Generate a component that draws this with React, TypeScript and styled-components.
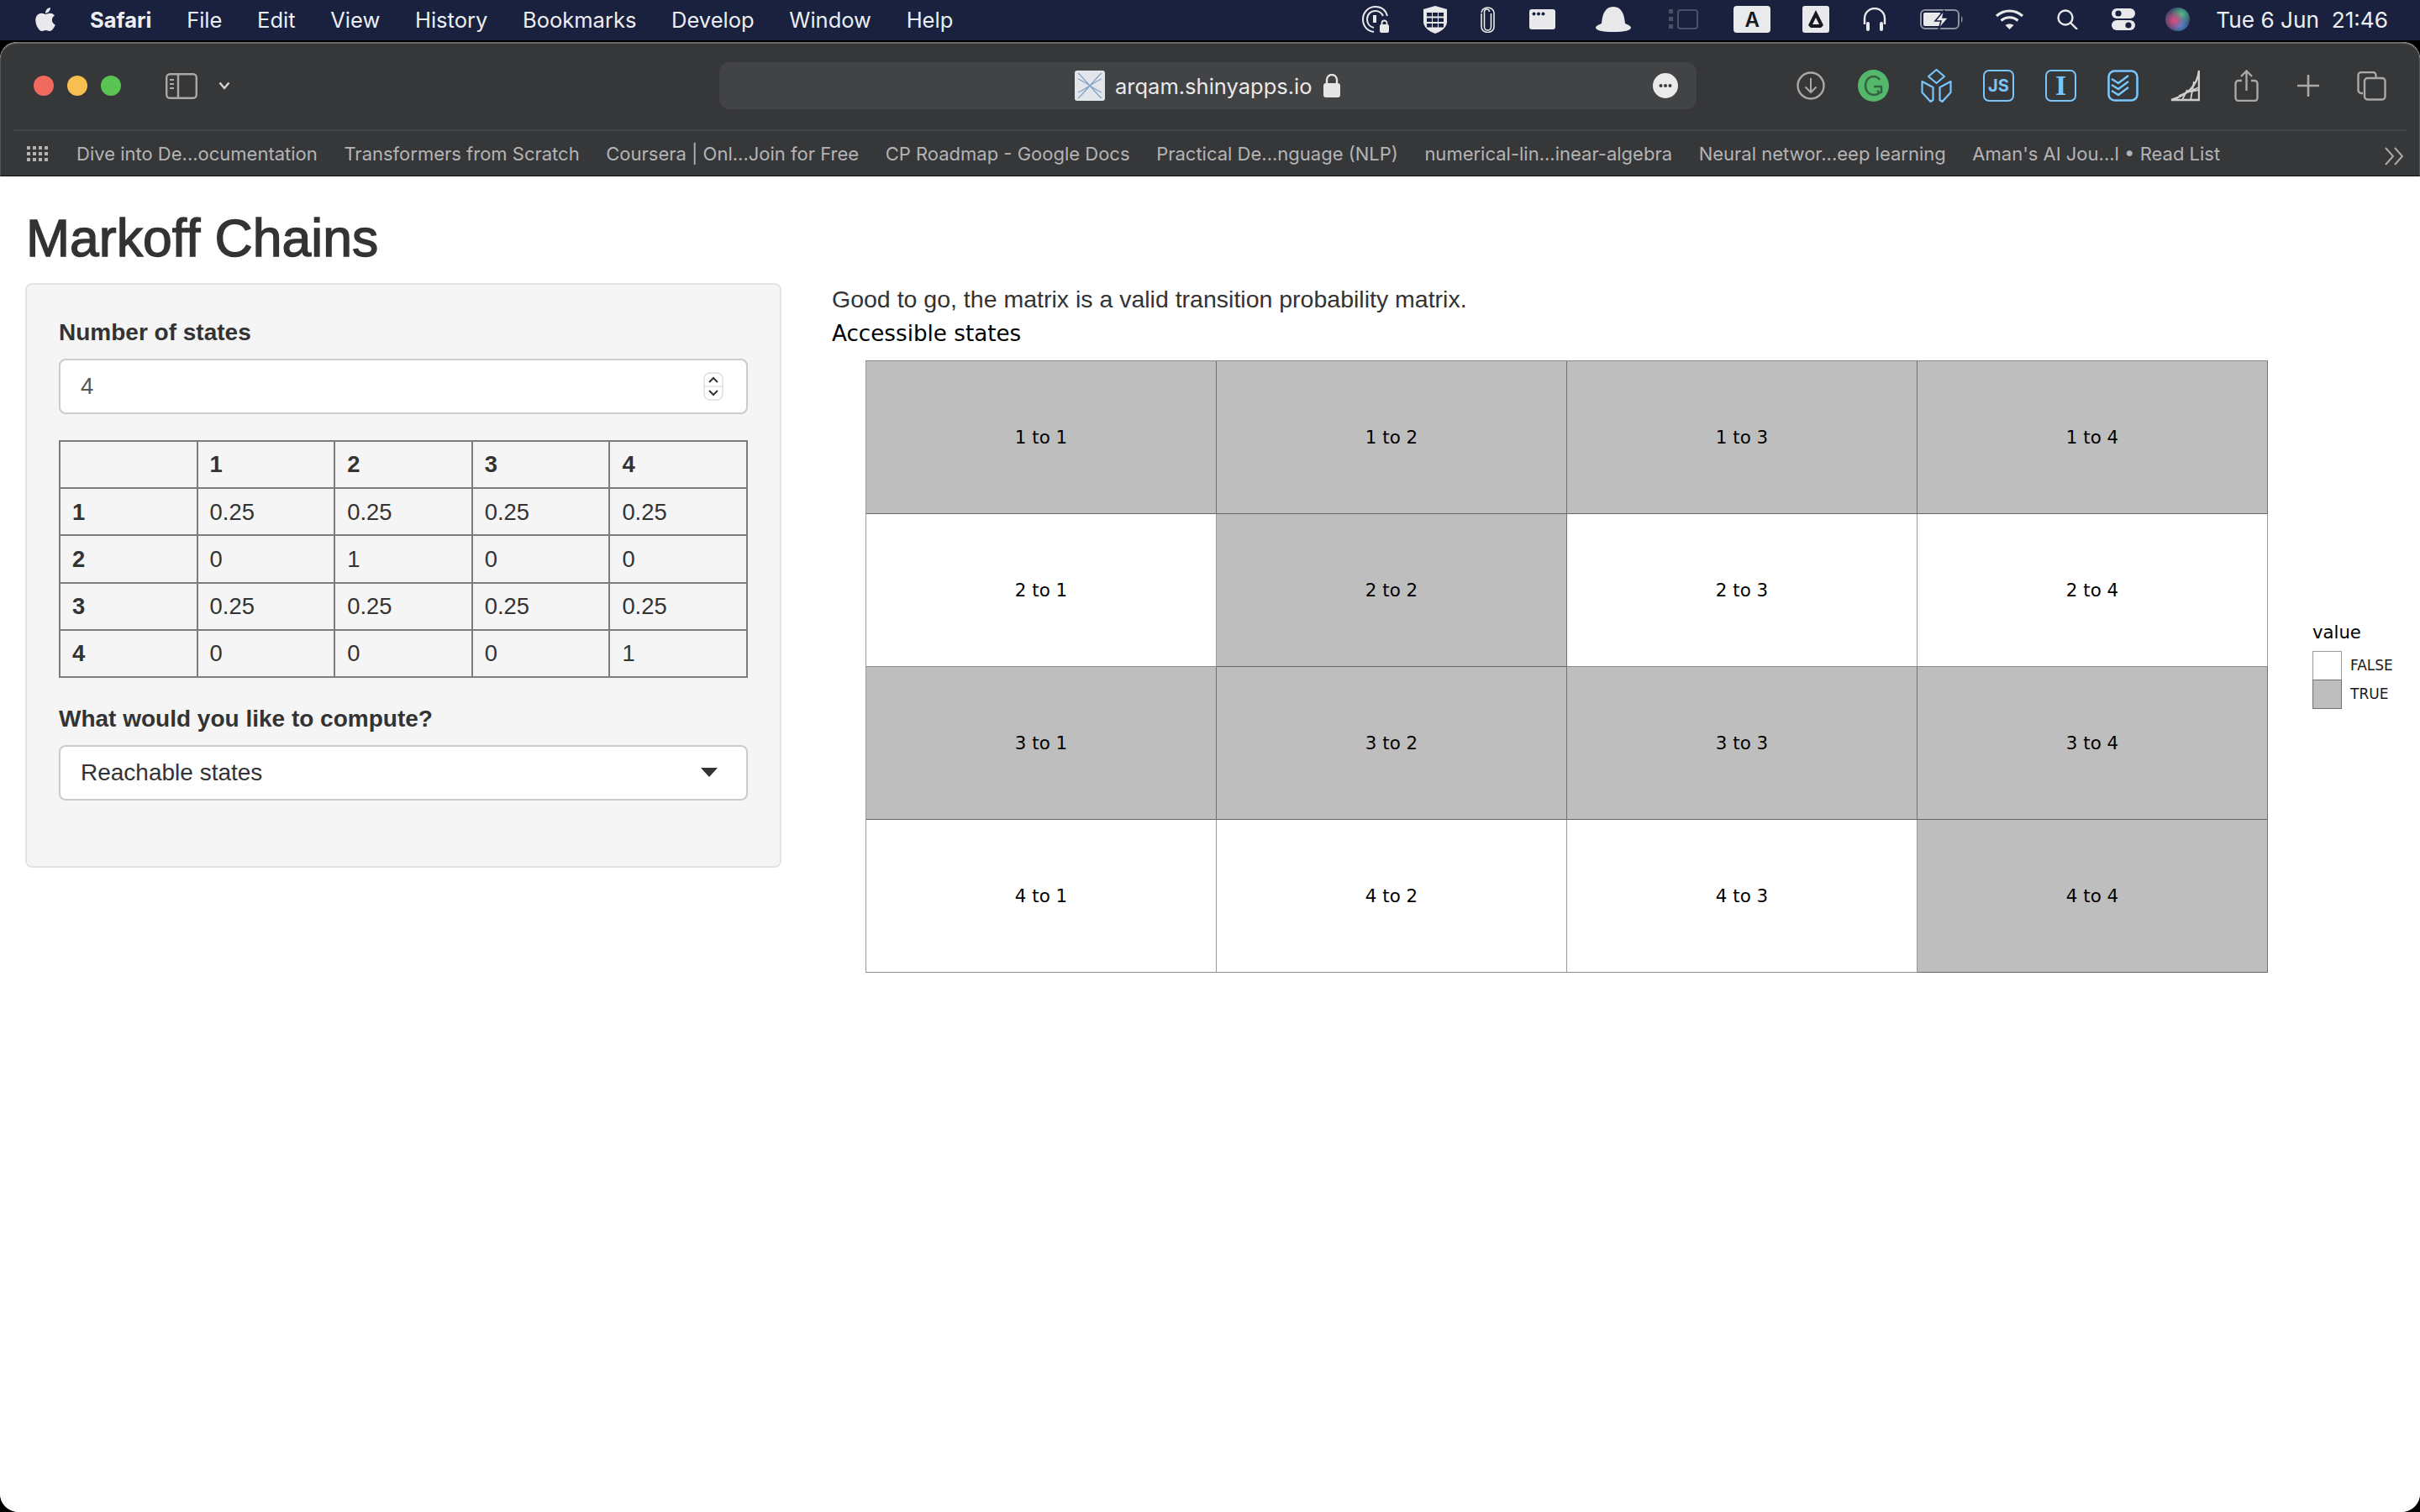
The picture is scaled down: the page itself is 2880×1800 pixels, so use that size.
import React from "react";
import styled, { createGlobalStyle } from "styled-components";
import { FaApple } from "react-icons/fa";

const Global = createGlobalStyle`
  html, body { margin: 0; padding: 0; background: #000; width: 2880px; height: 1800px; overflow: hidden; }
  * { box-sizing: border-box; }
`;

const Screen = styled.div`
  width: 2880px; height: 1800px; display: flex; flex-direction: column; background: #000;
`;
const MenuBar = styled.header`
  height: 48px; flex: none; display: flex; align-items: center; background: #19213e;
  padding: 0 0 2px 40px; color: #eceef2; font: 400 25.5px "Inter", sans-serif; margin-bottom: 2px;
`;
const AppleMark = styled(FaApple)`
  width: 28px; height: 32px; color: #e9e9eb; margin-right: 39px; flex: none;
`;
const Menus = styled.nav`display: flex; gap: 41.7px; align-items: center;`;
const MenuItem = styled.span<{ $bold?: boolean }>`
  font-weight: ${(p) => (p.$bold ? 700 : 400)};
  white-space: nowrap;
`;
const Slot = styled.span<{ $ml: number }>`
  display: inline-flex; flex: none; margin-left: ${(p) => p.$ml}px;
`;
const Tray = styled.div`
  margin-left: auto; display: flex; align-items: center; height: 100%;
`;
const KeyBox = styled.span`
  width: 44px; height: 32px; border-radius: 4px; background: #e9eaec; color: #16181d;
  font: 600 24px "Inter", sans-serif; display: flex; align-items: center; justify-content: center;
`;
const Clock = styled.span`
  margin-left: 31px; margin-right: 38px; font-size: 26.2px; white-space: pre; color: #eceef2;
`;

const Browser = styled.main`
  flex: 1; display: flex; flex-direction: column; border-radius: 20px 20px 22px 22px; overflow: hidden; background: #fff;
`;
const Chrome = styled.div`
  flex: none; height: 160px; background: #363739; display: flex; flex-direction: column;
  border-top: 2px solid #69696b; border-left: 1px solid #555658; border-right: 1px solid #555658;
  border-bottom: 1px solid #0d0d0e; border-radius: 20px 20px 0 0;
`;
const Toolbar = styled.div`
  height: 102px; flex: none; display: flex; align-items: center; padding: 0 0 2px 39px;
`;
const Light = styled.span<{ $c: string; $first?: boolean }>`
  width: 24px; height: 24px; border-radius: 50%; background: ${(p) => p.$c}; flex: none;
  margin-left: ${(p) => (p.$first ? 0 : 16)}px;
`;
const UrlBar = styled.div`
  width: 1163px; height: 56px; border-radius: 12px; background: #424345; flex: none;
  margin-left: 582px; display: flex; align-items: center; padding: 0 22px 0 423px;
`;
const UrlText = styled.span`
  margin-left: 12px; margin-right: 13px; color: #e9e9ea; font: 400 25.5px "Inter", sans-serif; white-space: nowrap;
`;
const MoreSlot = styled.span`margin-left: auto; display: inline-flex;`;
const BadgeBox = styled.span<{ $serif?: boolean }>`
  width: 37px; height: 38px; border: 2.5px solid #79c6fb; border-radius: 7px; color: #79c6fb;
  display: flex; align-items: center; justify-content: center;
  font: ${(p) => (p.$serif ? '700 34px "Liberation Serif", serif' : '700 20px "Inter", sans-serif')};
`;
const Separator = styled.div`height: 2px; margin: 0 15px; background: #434446; flex: none;`;
const Bookmarks = styled.div`
  height: 54px; flex: none; display: flex; align-items: center; padding-left: 31px; padding-right: 18px;
  color: #b4b4b5; font: 400 22px "Inter", sans-serif;
`;
const BookmarkList = styled.div`display: flex; gap: 31.6px; margin-left: 34px;`;
const Bookmark = styled.span`white-space: nowrap;`;
const MoreChevrons = styled.span`margin: 6px 0 0 auto; display: inline-flex;`;

const Page = styled.div`
  flex: 1; background: #fff; padding: 39px 0 0 30px; color: #333;
  font: 400 28px/40px "Liberation Sans", Arial, sans-serif;
`;
const Title = styled.h2`
  margin: 0 0 20px 1px; font: 400 62.5px/68px "Liberation Sans", Arial, sans-serif; color: #333;
  -webkit-text-stroke: 1.4px #333;
`;
const Layout = styled.div`display: flex; align-items: flex-start;`;
const Well = styled.aside`
  width: 900px; height: 696px; flex: none; background: #f5f5f5; border: 2px solid #e3e3e3; border-radius: 8px;
  padding: 41px 38px 0; display: flex; flex-direction: column;
`;
const FieldLabel = styled.label<{ $mt?: number }>`
  font-weight: 700; line-height: 32px; color: #333; margin-top: ${(p) => p.$mt ?? 0}px; margin-bottom: 15px;
`;
const Field = styled.div<{ $pr: number }>`
  height: 66px; flex: none; background: #fff; border: 2px solid #ccc; border-radius: 8px;
  display: flex; align-items: center; justify-content: space-between; padding: 0 ${(p) => p.$pr}px 0 24px;
`;
const NumberValue = styled.span`color: #555; font-size: 27.4px;`;
const SelectValue = styled.span`color: #333;`;
const Matrix = styled.table`
  width: 820px; margin-top: 31px; border-collapse: collapse; table-layout: fixed; font-size: 27.4px;
  th, td { height: 56.2px; border: 2px solid #7d7d7d; padding: 0 14px; text-align: left; color: #333; line-height: 1; }
  th { font-weight: 700; }
  td { font-weight: 400; }
`;
const Main = styled.section`margin-left: 60px; flex: none;`;
const Message = styled.div`color: #333; height: 40px; white-space: nowrap; font-size: 28.5px; line-height: 39px;`;
const PlotTitle = styled.div`
  color: #000; height: 40px; font: 400 26.2px/40px "DejaVu Sans", sans-serif;
`;
const PlotRow = styled.div`display: flex; margin: 12px 0 0 40px; align-items: flex-start;`;
const HeatGrid = styled.div`
  display: grid; grid-template-columns: repeat(4, 417px); grid-auto-rows: 182px;
  border-top: 1px solid rgba(0,0,0,.45); border-left: 1px solid rgba(0,0,0,.4);
`;
const HeatCell = styled.div<{ $on: boolean }>`
  background: ${(p) => (p.$on ? "#bebebe" : "#fff")};
  border-right: 1px solid rgba(0,0,0,.4); border-bottom: 1px solid rgba(0,0,0,.45);
  display: flex; align-items: center; justify-content: center;
  color: #000; font: 400 21.4px/1 "DejaVu Sans", sans-serif;
`;
const Legend = styled.div`margin: 308px 0 0 53px; display: flex; flex-direction: column; color: #000;`;
const LegendTitle = styled.div`font: 400 21.2px/32px "DejaVu Sans", sans-serif; margin-bottom: 6px;`;
const LegendRow = styled.div`display: flex; align-items: center; height: 34px;`;
const Swatch = styled.span<{ $on: boolean }>`
  width: 35px; height: 35px; flex: none; background: ${(p) => (p.$on ? "#bebebe" : "#fff")};
  border: 1px solid rgba(0,0,0,.4);
`;
const LegendLabel = styled.span`margin-left: 10px; font: 400 17px/1 "DejaVu Sans", sans-serif; color: #1a1a1a;`;

const ink = "#e9e9eb";
const navy = "#19213e";
const grey = "#a9a9aa";
const blue = "#79c6fb";

const AtLock = () => (
  <svg width="32" height="32" viewBox="0 0 32 32" fill="none" stroke={ink}>
    <path d="M14 31C6 30 1 24 1 16 1 8 7 1 16 1c7 0 12 4 14 11" strokeWidth="2" />
    <path d="M14 26c-5-1-8-5-8-10 0-6 4-10 10-10 4 0 7 2 9 6" strokeWidth="2" />
    <path d="M15 11v9" strokeWidth="4" />
    <rect x="21" y="22" width="11" height="10" rx="2" fill={ink} stroke="none" />
    <path d="M23.5 23v-2.5a3 3 0 0 1 6 0V23" strokeWidth="1.8" />
  </svg>
);
const Shield = () => (
  <svg width="28" height="33" viewBox="0 0 28 33">
    <path d="M14 0l14 4v15c0 7-8 12-14 14C8 31 0 26 0 19V4z" fill={ink} />
    {[8, 14.5, 21].map((y) => [4, 11, 18].map((x) => <rect key={`${x}-${y}`} x={x} y={y} width="6" height="4.5" fill={navy} />))}
  </svg>
);
const Clip = () => (
  <svg width="17" height="31" viewBox="0 0 17 31" fill="none" stroke={ink} strokeWidth="1.6">
    <path d="M12.5 8v16a4 4 0 0 1-8 0V6a3 3 0 0 1 6 0M1 8v16a7.5 6.5 0 0 0 15 0V7A7.5 6 0 0 0 1 7" />
  </svg>
);
const DotsWindow = () => (
  <svg width="31" height="24" viewBox="0 0 31 24">
    <rect width="31" height="24" rx="3" fill={ink} />
    {[5.5, 11, 16.5].map((x) => <circle key={x} cx={x} cy="5.5" r="2" fill={navy} />)}
  </svg>
);
const Hat = () => (
  <svg width="42" height="30" viewBox="0 0 42 30">
    <path d="M21 0C11 0 8 9 7 20c-3 1-7 3-7 5 0 3 8 5 21 5s21-2 21-5c0-2-4-4-7-5C34 9 31 0 21 0z" fill={ink} />
  </svg>
);
const DimSidebar = () => (
  <svg width="35" height="24" viewBox="0 0 35 24" fill="#4a5066">
    <rect x="11" y="1" width="23" height="22" rx="3" fill="none" stroke="#4a5066" strokeWidth="2" />
    <rect width="5" height="5" /><rect y="9" width="5" height="5" /><rect y="18" width="5" height="5" />
  </svg>
);
const Drive = () => (
  <svg width="32" height="32" viewBox="0 0 32 32">
    <rect width="32" height="32" rx="3" fill={ink} />
    <path d="M16 5l9 18-3 3H10l-3-3zM16 14l-4 8h8z" fill="#16181d" fillRule="evenodd" />
  </svg>
);
const Headphones = () => (
  <svg width="28" height="29" viewBox="0 0 28 29" fill="none" stroke={ink}>
    <path d="M2 20v-7a12 12 0 0 1 24 0v7" strokeWidth="2.4" />
    <rect x="4" y="17" width="4" height="11" rx="2" fill={ink} stroke="none" />
    <rect x="20" y="17" width="4" height="11" rx="2" fill={ink} stroke="none" />
  </svg>
);
const Battery = () => (
  <svg width="51" height="24" viewBox="0 0 51 24">
    <rect x="1" y="1" width="45" height="22" rx="5" fill="none" stroke="#8f93a1" strokeWidth="2" />
    <path d="M49 8c2 1 2 7 0 8z" fill="#8f93a1" />
    <rect x="4" y="4" width="21" height="16" rx="2" fill={ink} />
    <path d="M29 1L18 14h7l-3 10 12-14h-7z" fill={ink} stroke={navy} strokeWidth="1.6" />
  </svg>
);
const Wifi = () => (
  <svg width="35" height="24" viewBox="0 0 35 24" fill="none" stroke={ink} strokeWidth="3.2">
    <path d="M2 8c9-8 22-8 31 0M7.5 13.5c6-5 14-5 20 0" />
    <path d="M17.5 24l-5-5c3-2 7-2 10 0z" fill={ink} stroke="none" />
  </svg>
);
const Search = () => (
  <svg width="25" height="24" viewBox="0 0 25 24" fill="none" stroke={ink} strokeWidth="2.4">
    <circle cx="10" cy="10" r="8.5" /><path d="M16 16l8 8" />
  </svg>
);
const Controls = () => (
  <svg width="28" height="26" viewBox="0 0 28 26">
    <rect width="28" height="12" rx="6" fill={ink} />
    <circle cx="8" cy="6" r="3.6" fill={navy} />
    <rect y="14" width="28" height="12" rx="6" fill={ink} />
    <circle cx="20" cy="20" r="3.6" fill={navy} />
  </svg>
);
const Siri = () => (
  <svg width="29" height="28" viewBox="0 0 29 28">
    <defs>
      <radialGradient id="sp" cx="35%" cy="55%" r="45%"><stop offset="0" stopColor="#e04a7c" /><stop offset="1" stopColor="#e04a7c" stopOpacity="0" /></radialGradient>
      <radialGradient id="sg" cx="65%" cy="30%" r="45%"><stop offset="0" stopColor="#4fc58c" /><stop offset="1" stopColor="#4fc58c" stopOpacity="0" /></radialGradient>
      <radialGradient id="sb" cx="60%" cy="75%" r="45%"><stop offset="0" stopColor="#4a8bd8" /><stop offset="1" stopColor="#4a8bd8" stopOpacity="0" /></radialGradient>
    </defs>
    <ellipse cx="14.5" cy="14" rx="14.5" ry="14" fill="#37476a" />
    <ellipse cx="14.5" cy="14" rx="14.5" ry="14" fill="url(#sg)" />
    <ellipse cx="14.5" cy="14" rx="14.5" ry="14" fill="url(#sb)" />
    <ellipse cx="14.5" cy="14" rx="14.5" ry="14" fill="url(#sp)" />
  </svg>
);
const SidebarIcon = () => (
  <svg width="38" height="31" viewBox="0 0 38 31" fill="none" stroke={grey} strokeWidth="2.4">
    <rect x="1.2" y="1.2" width="35.6" height="28.6" rx="4" />
    <path d="M15 1v29" />
    <path d="M5 8h5M5 13h5M5 18h5" strokeWidth="2" />
  </svg>
);
const ChevronSmall = () => (
  <svg width="14" height="10" viewBox="0 0 14 10" fill="none" stroke="#d6d6d7" strokeWidth="2.4">
    <path d="M1.5 1.5L7 8l5.5-6.5" />
  </svg>
);
const Favicon = () => (
  <svg width="36" height="36" viewBox="0 0 36 36" fill="none" stroke="#7fa2c8" strokeWidth="1.2">
    <rect width="36" height="36" rx="3" fill="#e2e5ea" stroke="none" />
    <path d="M4 3c8 7 20 23 28 30M32 3C24 10 12 26 4 33M4 10c10 4 18 12 28 16M32 10C22 14 14 22 4 26" />
  </svg>
);
const Lock = () => (
  <svg width="20" height="28" viewBox="0 0 20 28" fill="none">
    <rect y="11" width="20" height="17" rx="3" fill="#e5e5e6" />
    <path d="M4 12V7a6 6 0 0 1 12 0v5" stroke="#e5e5e6" strokeWidth="2.4" />
  </svg>
);
const MoreDots = () => (
  <svg width="30" height="30" viewBox="0 0 30 30">
    <circle cx="15" cy="15" r="15" fill="#eaeaeb" />
    {[9.5, 15, 20.5].map((x) => <circle key={x} cx={x} cy="15" r="2" fill="#3a3b3d" />)}
  </svg>
);
const Download = () => (
  <svg width="34" height="34" viewBox="0 0 34 34" fill="none" stroke={grey} strokeWidth="2.4">
    <circle cx="17" cy="17" r="15.5" /><path d="M17 8v17M10.5 18.5L17 25l6.5-6.5" strokeWidth="2" />
  </svg>
);
const Grammarly = () => (
  <svg width="37" height="38" viewBox="0 0 37 38" fill="none">
    <ellipse cx="18.5" cy="19" rx="18.5" ry="19" fill="#53b86b" />
    <path d="M26 12c-2-3-4.500-4-7.500-4C13 8 9 13 9 19s4 11 10 11c3 0 5.500-1 7-3" stroke="#36663f" strokeWidth="2.6" />
    <path d="M19 20h9v8M23 25l4 3" stroke="#36663f" strokeWidth="2.4" />
  </svg>
);
const Cube = () => (
  <svg width="37" height="40" viewBox="0 0 37 40" fill="none" stroke={blue} strokeWidth="2.2" strokeLinejoin="round">
    <path d="M18.500 1l9.500 8-9.500 8-9.500-8z" />
    <path d="M1.500 15l13 7v15l-3 2-10-11zM35.500 15l-13 7v15l3 2 10-11z" />
  </svg>
);
const Stacked = () => (
  <svg width="37" height="38" viewBox="0 0 37 38" fill="none" stroke={blue}>
    <rect x="1.500" y="1.500" width="34" height="35" rx="7" strokeWidth="2.600" />
    <path d="M5 11l8 5 12-9M5 18l8 5 12-9M5 25l8 5 12-9" strokeWidth="2.400" />
  </svg>
);
const Curve = () => (
  <svg width="35" height="38" viewBox="0 0 35 38" fill="none" stroke="#cfcfd0" strokeWidth="2.400">
    <path d="M1 36h33V1C32 20 20 30 1 36z" />
    <path d="M34 36V14M24 36l4-22M14 36l6-12M10 31l24-10M18 27l16-3" strokeWidth="1.800" />
  </svg>
);
const Share = () => (
  <svg width="29" height="38" viewBox="0 0 29 38" fill="none" stroke={grey} strokeWidth="2.400">
    <path d="M9 13H5a3.500 3.500 0 0 0-3.500 3.500v17A3.500 3.500 0 0 0 5 37h19a3.500 3.500 0 0 0 3.500-3.500v-17A3.500 3.500 0 0 0 24 13h-4" />
    <path d="M14.500 25V2M8 8l6.500-6.500L21 8" />
  </svg>
);
const Plus = () => (
  <svg width="26" height="26" viewBox="0 0 26 26" stroke={grey} strokeWidth="2.600">
    <path d="M13 0v26M0 13h26" />
  </svg>
);
const Tabs = () => (
  <svg width="35" height="35" viewBox="0 0 35 35" fill="none" stroke={grey} strokeWidth="2.400">
    <path d="M7 26H5a3.500 3.500 0 0 1-3.500-3.500v-18A3.500 3.500 0 0 1 5 1h14a3.500 3.500 0 0 1 3.500 3.500V8" />
    <rect x="9" y="8" width="24.500" height="25.500" rx="3.500" />
  </svg>
);
const AppGrid = () => (
  <svg width="25" height="18" viewBox="0 0 25 18" fill="#b4b4b5">
    {[0, 7, 14].map((y) => [0, 7, 14, 21].map((x) => <rect key={`${x}-${y}`} x={x} y={y} width="4" height="4" />))}
  </svg>
);
const DoubleChevron = () => (
  <svg width="23" height="22" viewBox="0 0 23 22" fill="none" stroke={grey} strokeWidth="2">
    <path d="M1 1l9 10-9 10M12 1l9 10-9 10" />
  </svg>
);
const Spinner = () => (
  <svg width="24" height="34" viewBox="0 0 24 34" fill="none">
    <rect x="1" y="1" width="22" height="32" rx="7" fill="#fff" stroke="#ddd" strokeWidth="1.400" />
    <path d="M1 17h22" stroke="#ddd" strokeWidth="1.200" />
    <path d="M7 12l5-5 5 5M7 22l5 5 5-5" stroke="#333" strokeWidth="2" />
  </svg>
);
const Caret = () => (
  <svg width="20" height="11" viewBox="0 0 20 11"><path d="M0 0h20L10 11z" fill="#333" /></svg>
);

const menus = ["File", "Edit", "View", "History", "Bookmarks", "Develop", "Window", "Help"];
const marks = [
  "Dive into De...ocumentation", "Transformers from Scratch", "Coursera | Onl...Join for Free", "CP Roadmap - Google Docs",
  "Practical De...nguage (NLP)", "numerical-lin...inear-algebra", "Neural networ...eep learning", "Aman's AI Jou...l • Read List",
];
const matrix = [["0.25", "0.25", "0.25", "0.25"], ["0", "1", "0", "0"], ["0.25", "0.25", "0.25", "0.25"], ["0", "0", "0", "1"]];
const reachable = [[1, 1, 1, 1], [0, 1, 0, 0], [1, 1, 1, 1], [0, 0, 0, 1]];

export default function App() {
  return (
    <Screen>
      <Global />
      <MenuBar>
        <AppleMark />
        <Menus>
          <MenuItem $bold>Safari</MenuItem>
          {menus.map((m) => <MenuItem key={m}>{m}</MenuItem>)}
        </Menus>
        <Tray>
          <Slot $ml={0}><AtLock /></Slot>
          <Slot $ml={41}><Shield /></Slot>
          <Slot $ml={40}><Clip /></Slot>
          <Slot $ml={41}><DotsWindow /></Slot>
          <Slot $ml={48}><Hat /></Slot>
          <Slot $ml={45}><DimSidebar /></Slot>
          <Slot $ml={42}><KeyBox>A</KeyBox></Slot>
          <Slot $ml={38}><Drive /></Slot>
          <Slot $ml={40}><Headphones /></Slot>
          <Slot $ml={40}><Battery /></Slot>
          <Slot $ml={38}><Wifi /></Slot>
          <Slot $ml={39}><Search /></Slot>
          <Slot $ml={40}><Controls /></Slot>
          <Slot $ml={36}><Siri /></Slot>
          <Clock>Tue 6 Jun  21:46</Clock>
        </Tray>
      </MenuBar>
      <Browser>
        <Chrome>
          <Toolbar>
            <Light $c="#f26a5e" $first />
            <Light $c="#f6bf4f" />
            <Light $c="#5ac452" />
            <Slot $ml={53}><SidebarIcon /></Slot>
            <Slot $ml={25}><ChevronSmall /></Slot>
            <UrlBar>
              <Favicon />
              <UrlText>arqam.shinyapps.io</UrlText>
              <Lock />
              <MoreSlot><MoreDots /></MoreSlot>
            </UrlBar>
            <Slot $ml={119}><Download /></Slot>
            <Slot $ml={39}><Grammarly /></Slot>
            <Slot $ml={38}><Cube /></Slot>
            <Slot $ml={37}><BadgeBox>JS</BadgeBox></Slot>
            <Slot $ml={37}><BadgeBox $serif>I</BadgeBox></Slot>
            <Slot $ml={37}><Stacked /></Slot>
            <Slot $ml={38}><Curve /></Slot>
            <Slot $ml={41}><Share /></Slot>
            <Slot $ml={46}><Plus /></Slot>
            <Slot $ml={45}><Tabs /></Slot>
          </Toolbar>
          <Separator />
          <Bookmarks>
            <AppGrid />
            <BookmarkList>
              {marks.map((m) => <Bookmark key={m}>{m}</Bookmark>)}
            </BookmarkList>
            <MoreChevrons><DoubleChevron /></MoreChevrons>
          </Bookmarks>
        </Chrome>
        <Page>
          <Title>Markoff Chains</Title>
          <Layout>
            <Well>
              <FieldLabel>Number of states</FieldLabel>
              <Field $pr={27}>
                <NumberValue>4</NumberValue>
                <Spinner />
              </Field>
              <Matrix>
                <thead>
                  <tr><th />{[1, 2, 3, 4].map((n) => <th key={n}>{n}</th>)}</tr>
                </thead>
                <tbody>
                  {matrix.map((row, i) => (
                    <tr key={i}>
                      <th>{i + 1}</th>
                      {row.map((v, j) => <td key={j}>{v}</td>)}
                    </tr>
                  ))}
                </tbody>
              </Matrix>
              <FieldLabel $mt={33}>What would you like to compute?</FieldLabel>
              <Field $pr={34}>
                <SelectValue>Reachable states</SelectValue>
                <Caret />
              </Field>
            </Well>
            <Main>
              <Message>Good to go, the matrix is a valid transition probability matrix.</Message>
              <PlotTitle>Accessible states</PlotTitle>
              <PlotRow>
                <HeatGrid>
                  {reachable.map((row, i) =>
                    row.map((v, j) => (
                      <HeatCell key={`${i}-${j}`} $on={!!v}>{`${i + 1} to ${j + 1}`}</HeatCell>
                    ))
                  )}
                </HeatGrid>
                <Legend>
                  <LegendTitle>value</LegendTitle>
                  <LegendRow><Swatch $on={false} /><LegendLabel>FALSE</LegendLabel></LegendRow>
                  <LegendRow><Swatch $on /><LegendLabel>TRUE</LegendLabel></LegendRow>
                </Legend>
              </PlotRow>
            </Main>
          </Layout>
        </Page>
      </Browser>
    </Screen>
  );
}
